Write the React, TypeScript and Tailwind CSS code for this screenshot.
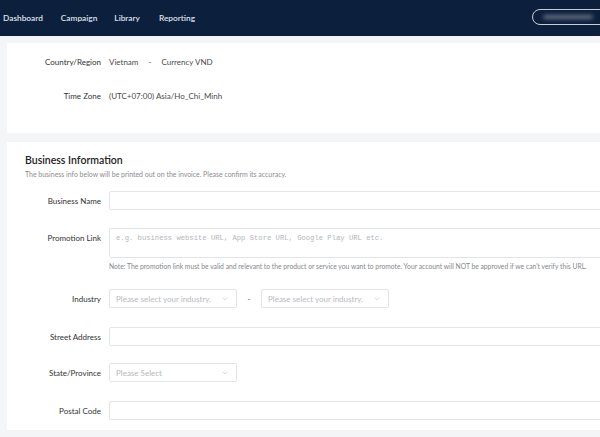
import { ChevronDown } from "lucide-react";

const font = { fontFamily: 'Lato, "Noto Sans", Arial, sans-serif' };

function Label({ text }: { text: string }) {
    return (
        <div className="w-[94px] shrink-0 h-[19px] flex items-center justify-end text-[8px] text-[#333]">
            {text}
        </div>
    );
}

function Select({ placeholder, width }: { placeholder: string; width: string }) {
    return (
        <div className={`${width} h-[19px] border border-[#e2e4e8] rounded-[2px] bg-white flex items-center justify-between pl-[6px] pr-[7px]`}>
            <span className="text-[8px] text-[#b7b9bd]">{placeholder}</span>
            <ChevronDown className="w-[8px] h-[8px] text-[#b7b9bd]" strokeWidth={1.5} />
        </div>
    );
}

export default function App() {
    return (
        <div className="w-[600px] h-[437px] overflow-hidden bg-[#f4f5f7]" style={font}>
            {/* top bar */}
            <div className="h-[36px] bg-[#0c1f3d] flex items-center relative">
                <div className="flex items-center text-[8.3px] font-semibold text-[#dfe3ea]">
                    <span className="ml-[3px]">Dashboard</span>
                    <span className="ml-[18px]">Campaign</span>
                    <span className="ml-[17px]">Library</span>
                    <span className="ml-[19px]">Reporting</span>
                </div>
                <div className="absolute left-[532px] top-[9px] w-[90px] h-[16px] rounded-full border-[1.5px] border-[#c9cdd5] flex items-center pl-[10px]">
                    <div className="w-[50px] h-[4px] bg-[#6b7587] blur-[2px] rounded-full" />
                </div>
            </div>

            <div className="w-[620px] pl-[7px] pt-[7px] flex flex-col gap-[9px]">
                {/* account card */}
                <div className="bg-white h-[90px] flex flex-col pt-[9px] text-[8px]">
                    <div className="flex items-center">
                        <Label text="Country/Region" />
                        <div className="ml-[8px] flex items-center text-[#4a4a4a]">
                            <span>Vietnam</span>
                            <span className="ml-[10px]">-</span>
                            <span className="ml-[10px]">Currency VND</span>
                        </div>
                    </div>
                    <div className="flex items-center mt-[15px]">
                        <Label text="Time Zone" />
                        <div className="ml-[8px] text-[#4a4a4a]">(UTC+07:00) Asia/Ho_Chi_Minh</div>
                    </div>
                </div>

                {/* business card */}
                <div className="bg-white h-[288px] flex flex-col">
                    <div className="pl-[18px] pt-[11px]">
                        <div className="text-[10.5px] font-semibold text-[#222] leading-[14px]">Business Information</div>
                        <div className="text-[6.95px] text-[#8a8c90] mt-[3px] leading-[9px]">
                            The business info below will be printed out on the invoice. Please confirm its accuracy.
                        </div>
                    </div>

                    <div className="flex mt-[12px]">
                        <Label text="Business Name" />
                        <div className="ml-[8px] flex-1 h-[19px] border border-[#e2e4e8] rounded-[2px]" />
                    </div>

                    <div className="flex mt-[18px]">
                        <Label text="Promotion Link" />
                        <div className="ml-[8px] flex-1 flex flex-col">
                            <div className="h-[30px] border border-[#e2e4e8] rounded-[2px] px-[6px] pt-[4px] text-[7.2px] text-[#b4b6ba]" style={{ fontFamily: '"Liberation Mono", monospace' }}>
                                e.g. business website URL, App Store URL, Google Play URL etc.
                            </div>
                            <div className="text-[6.75px] text-[#85878b] mt-[4px] leading-[9px] whitespace-nowrap">
                                Note: The promotion link must be valid and relevant to the product or service you want to promote. Your account will NOT be approved if we can't verify this URL.
                            </div>
                        </div>
                    </div>

                    <div className="flex mt-[18px]">
                        <Label text="Industry" />
                        <div className="ml-[8px] flex items-center">
                            <Select placeholder="Please select your industry." width="w-[128px]" />
                            <span className="w-[24px] text-center text-[8px] text-[#555]">-</span>
                            <Select placeholder="Please select your industry." width="w-[128px]" />
                        </div>
                    </div>

                    <div className="flex mt-[19px]">
                        <Label text="Street Address" />
                        <div className="ml-[8px] flex-1 h-[19px] border border-[#e2e4e8] rounded-[2px]" />
                    </div>

                    <div className="flex mt-[17px]">
                        <Label text="State/Province" />
                        <div className="ml-[8px]">
                            <Select placeholder="Please Select" width="w-[128px]" />
                        </div>
                    </div>

                    <div className="flex mt-[19px]">
                        <Label text="Postal Code" />
                        <div className="ml-[8px] flex-1 h-[19px] border border-[#e2e4e8] rounded-[2px]" />
                    </div>
                </div>
            </div>
        </div>
    );
}
